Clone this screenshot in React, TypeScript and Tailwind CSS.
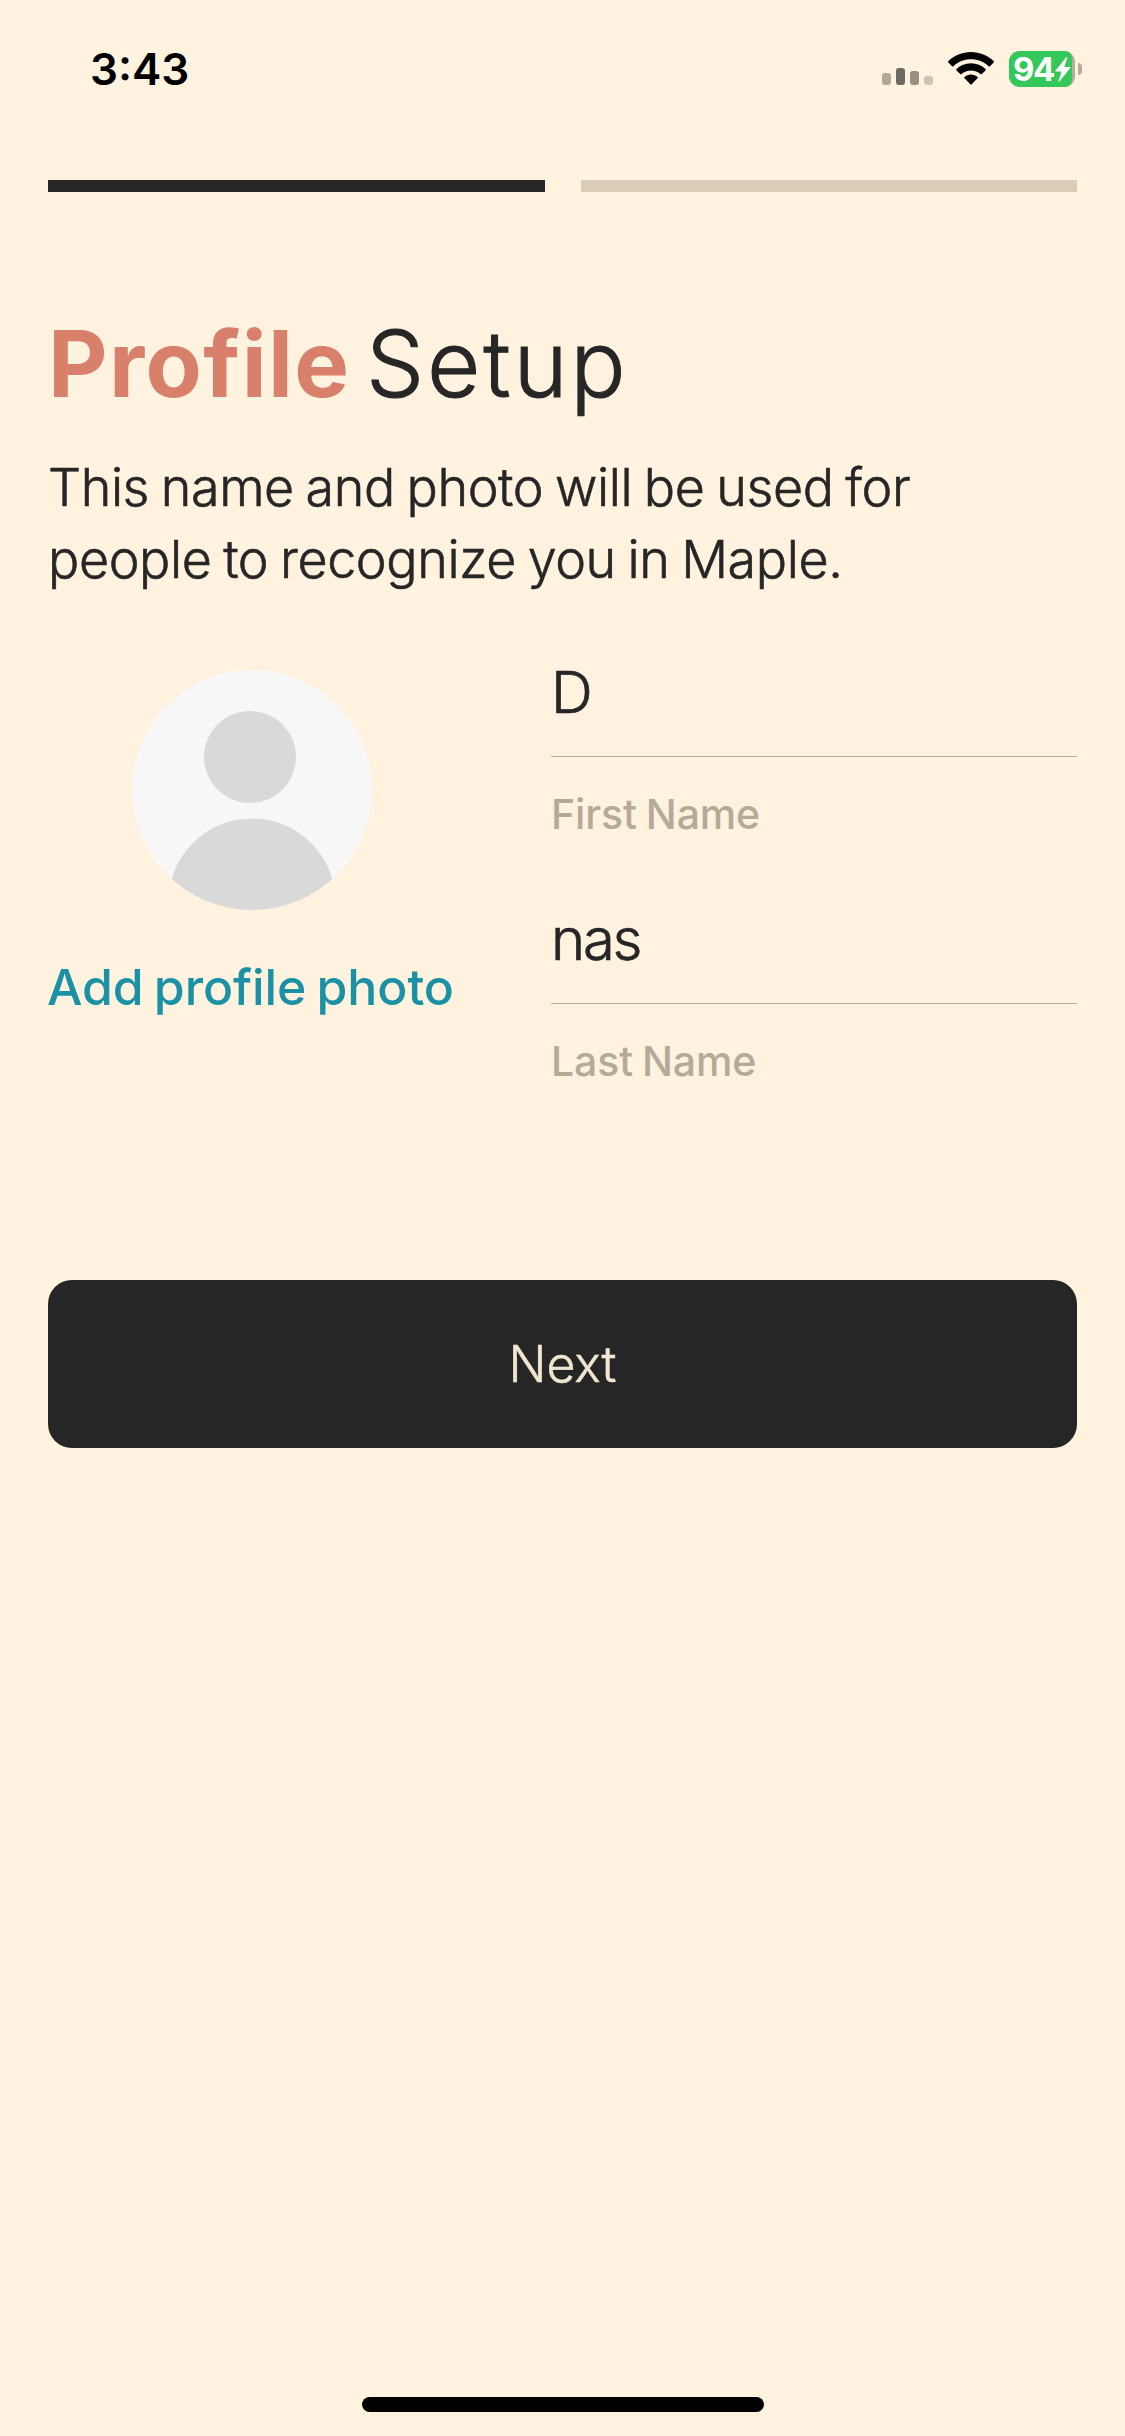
import React, { useState } from 'react';

interface NameFieldProps {
  label: string;
  value: string;
  onChange: (value: string) => void;
}

function SignalIcon() {
  return (
    <svg className="w-[52px] h-[17px]" viewBox="0 0 52 17">
      <rect x="0" y="5" width="9" height="12" rx="3" fill="#b3a797" />
      <rect x="14" y="0" width="9" height="17" rx="3" fill="#6d6a62" />
      <rect x="28" y="3" width="9" height="14" rx="3" fill="#9a8f82" />
      <rect x="42" y="8" width="9" height="9" rx="3" fill="#cfc3b1" />
    </svg>
  );
}

function WifiIcon() {
  return (
    <svg className="block w-[46px] h-[33px]" viewBox="0 0 46 33">
      <path d="M23 0C14.2 0 6.2 3.5.4 9.100Q-.2 9.800.4 10.500L4 14.200Q4.700 14.900 5.400 14.200C10 9.900 16.200 7.300 23 7.300S36 9.900 40.600 14.200Q41.300 14.900 42 14.200L45.600 10.500Q46.200 9.800 45.600 9.100C39.800 3.500 31.800 0 23 0Z" />
      <path d="M23 11.300C17.400 11.300 12.300 13.500 8.500 17Q7.800 17.700 8.500 18.400L12.200 22Q12.900 22.700 13.600 22C16.100 19.800 19.400 18.500 23 18.500S29.900 19.800 32.400 22Q33.100 22.700 33.800 22L37.500 18.400Q38.200 17.700 37.500 17C33.700 13.500 28.600 11.300 23 11.300Z" />
      <path d="M23 22.500C20.500 22.500 18.200 23.400 16.500 24.900Q15.700 25.600 16.500 26.300L22.300 32.300Q23 33 23.700 32.300L29.500 26.300Q30.300 25.600 29.500 24.900C27.800 23.400 25.500 22.500 23 22.500Z" />
    </svg>
  );
}

function Battery() {
  return (
    <div className="flex items-center gap-[3px]">
      <div className="w-[66px] h-9 rounded-[11px] bg-[#b8ab98]">
        <div className="flex items-center w-[63px] h-9 pl-1 rounded-l-[11px] rounded-r-[7px] bg-[#34c759] text-white">
          <span className="text-[33px] leading-9 font-bold tracking-[-1.500px]">94</span>
          <svg className="ml-auto mr-px w-4 h-[25px] shrink-0" viewBox="0 0 16 25" fill="currentColor">
            <path d="M11.500 0L0.400 13.800Q0 14.600 0.900 14.600H6.600L3.400 24.300Q3.500 25 4.300 24.500L15.500 10.800Q15.900 9.900 15 9.900H9.300L12.400.6Q12.300-.2 11.500 0Z" />
          </svg>
        </div>
      </div>
      <div className="w-1 h-3 rounded-r-full bg-[#b8ab98]" />
    </div>
  );
}

function Avatar() {
  return (
    <svg className="w-60 h-60" viewBox="0 0 240 240">
      <clipPath id="avatar">
        <circle cx="120" cy="120" r="120" />
      </clipPath>
      <g clipPath="url(#avatar)">
        <rect width="240" height="240" fill="#f7f7f7" />
        <circle cx="118" cy="87" r="46" fill="#d9d9d9" />
        <circle cx="120" cy="232" r="83.500" fill="#d9d9d9" />
      </g>
    </svg>
  );
}

function NameField({ label, value, onChange }: NameFieldProps) {
  return (
    <label className="block">
      <input
        value={value}
        onChange={(e) => onChange(e.target.value)}
        className="block w-full h-[100px] pb-[30px] border-b border-[#b5aa98] bg-transparent outline-none text-[58px] leading-[70px] font-light tracking-[-2.200px] [-webkit-text-stroke:0.7px]"
      />
      <span className="block mt-8 text-[41px] leading-[50px] font-medium text-[#b5aa97] tracking-[-0.100px] [word-spacing:-2px]">{label}</span>
    </label>
  );
}

export default function App() {
  const [firstName, setFirstName] = useState('D');
  const [lastName, setLastName] = useState('nas');

  return (
    <div className="flex flex-col w-[1125px] h-[2436px] overflow-hidden bg-[#fff2df] text-[#262626] font-['Inter',sans-serif]">
      <header className="flex items-start justify-between h-[180px] pl-[90px] pr-[43px] text-black">
        <div className="mt-[42px] text-[44px] leading-[54px] font-semibold">3:43</div>
        <div className="flex items-end mt-[51px] h-9">
          <div className="mb-0.5">
            <SignalIcon />
          </div>
          <div className="ml-[14px] mb-0.5">
            <WifiIcon />
          </div>
          <div className="ml-[15px]">
            <Battery />
          </div>
        </div>
      </header>

      <main className="px-12">
        <div className="grid grid-cols-2 gap-9">
          <div className="h-3 bg-[#262626]" />
          <div className="h-3 bg-[#d9cdb8]" />
        </div>

        <h1 className="mt-[117px] text-[92px] leading-[110px] font-light whitespace-nowrap tracking-[2.800px] [word-spacing:-13px]">
          <span className="font-bold text-[#d9806c] tracking-[1.300px]">Profile</span>
          <span className="[-webkit-text-stroke:1px]"> Setup</span>
        </h1>
        <p className="mt-[33px] text-[52px] leading-[72px] font-light whitespace-nowrap tracking-[-0.400px] [word-spacing:-2.500px] [-webkit-text-stroke:0.6px]">
          This name and photo will be used for
          <br />
          people to recognize you in Maple.
        </p>

        <div className="flex items-start justify-between mt-[61px]">
          <div className="flex flex-col items-center w-[408px] pt-[13px]">
            <Avatar />
            <button className="mt-[47px] mr-[3px] text-[50px] leading-[60px] font-medium text-[#1a91a5] whitespace-nowrap tracking-[-0.100px] [word-spacing:-3px]">
              Add profile photo
            </button>
          </div>
          <div className="flex flex-col gap-[65px] w-[526px]">
            <NameField label="First Name" value={firstName} onChange={setFirstName} />
            <NameField label="Last Name" value={lastName} onChange={setLastName} />
          </div>
        </div>

        <button className="block w-full h-[168px] mt-[194px] rounded-3xl bg-[#262626] text-[50px] font-light text-[#f1e6cf] [-webkit-text-stroke:0.5px]">
          Next
        </button>
      </main>

      <div className="w-[402px] h-[15px] mt-auto mb-6 mx-auto rounded-full bg-black" />
    </div>
  );
}
